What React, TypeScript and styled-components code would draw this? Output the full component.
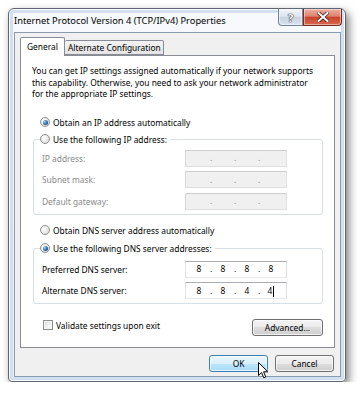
import React from "react";
import styled, { createGlobalStyle } from "styled-components";

const GlobalStyle = createGlobalStyle`
  html, body {
    margin: 0;
    background: #fff;
  }
  body {
    font-family: "Noto Sans", "Open Sans", sans-serif;
    font-size: 8.4px;
    color: #000;
  }
`;

const Stage = styled.div`
  padding: 8px 0 0 8px;
`;

const Window = styled.div`
  width: 338px;
  height: 374px;
  box-sizing: border-box;
  border: 1px solid #5d6672;
  border-radius: 6px 6px 4px 4px;
  background: linear-gradient(180deg, #f7f9fc 0%, #e9f0f8 100%);
  box-shadow: inset 0 0 0 1px #fff, inset 0 0 0 4px #d0e0f1, 3px 4px 8px rgba(0, 0, 0, 0.5);
  display: flex;
  flex-direction: column;
`;

const TitleBar = styled.div`
  height: 23px;
  display: flex;
  align-items: flex-start;
`;

const Title = styled.div`
  padding: 5px 0 0 5px;
  font-size: 9.3px;
  line-height: 14px;
  white-space: nowrap;
`;

const CaptionButtons = styled.div`
  margin-left: auto;
  margin-right: 3px;
  display: flex;
`;

const CaptionButton = styled.div<{ $close?: boolean }>`
  width: ${(p) => (p.$close ? 39 : 25)}px;
  height: 17px;
  box-sizing: border-box;
  display: flex;
  align-items: center;
  justify-content: center;
  border: 1px solid ${(p) => (p.$close ? "#7a2c22" : "#76869a")};
  border-top: none;
  border-radius: ${(p) => (p.$close ? "0 0 4px 0" : "0 0 0 4px")};
  background: ${(p) =>
    p.$close
      ? "linear-gradient(180deg, #ecb0a3 0%, #df826c 45%, #c9442b 52%, #d5694f 100%)"
      : "linear-gradient(180deg, #f3f6fa 0%, #dde5ef 45%, #c9d4e2 52%, #dae3ee 100%)"};
  box-shadow: inset 0 0 0 1px rgba(255, 255, 255, 0.45);
  font-size: 11px;
  font-weight: bold;
  color: #fff;
  text-shadow: 0 0 1px #333, 0 0 1px #333, 0 0 1px #333;
`;

const Client = styled.div`
  flex: 1;
  margin: 0 4px 4px 5px;
  box-sizing: border-box;
  border: 1px solid #8a9bb0;
  background: #f0f0f0;
  padding: 4px 5px;
  display: flex;
  flex-direction: column;
`;

const TabStrip = styled.div`
  height: 18px;
  display: flex;
  align-items: flex-end;
  position: relative;
  z-index: 1;
`;

const Tab = styled.div<{ $active?: boolean }>`
  box-sizing: border-box;
  height: ${(p) => (p.$active ? 19 : 15)}px;
  margin-bottom: ${(p) => (p.$active ? -1 : 0)}px;
  padding: ${(p) => (p.$active ? "3px 6px 0" : "1px 2px 0 3px")};
  border: 1px solid #898c95;
  border-left: ${(p) => (p.$active ? "1px solid #898c95" : "none")};
  border-bottom: ${(p) => (p.$active ? "none" : "1px solid #898c95")};
  border-radius: 2px 2px 0 0;
  background: ${(p) => (p.$active ? "#fff" : "linear-gradient(180deg, #f3f3f3 0%, #e4e4e4 100%)")};
  line-height: 12px;
  white-space: nowrap;
`;

const Panel = styled.div`
  height: 293px;
  box-sizing: border-box;
  border: 1px solid #898c95;
  background: #fff;
  display: flex;
  flex-direction: column;
`;

const Intro = styled.p`
  margin: 0;
  padding: 9px 0 0 11px;
  line-height: 11.5px;
  white-space: nowrap;
`;

const RadioRow = styled.label<{ $top: number }>`
  display: flex;
  align-items: center;
  gap: 3px;
  height: 13px;
  margin: ${(p) => p.$top}px 0 0 19px;
  white-space: nowrap;
`;

const Radio = styled.span<{ $checked?: boolean }>`
  width: 10px;
  height: 10px;
  box-sizing: border-box;
  border-radius: 50%;
  border: 1px solid #8e8f8f;
  background: radial-gradient(circle at 35% 35%, #ffffff 0%, #e6e6e6 60%, #cfcfcf 100%);
  display: inline-flex;
  align-items: center;
  justify-content: center;
  flex-shrink: 0;

  &::after {
    content: "";
    display: ${(p) => (p.$checked ? "block" : "none")};
    width: 5px;
    height: 5px;
    border-radius: 50%;
    background: radial-gradient(circle at 35% 35%, #a8d6f7 0%, #2a6fb0 50%, #0e2d52 100%);
  }
`;

const GroupBox = styled.fieldset<{ $top: number; $padTop: number }>`
  margin: ${(p) => p.$top}px 11px 0 12px;
  padding: ${(p) => p.$padTop}px 0 4px 8px;
  border: 1px solid #d5dfe5;
  border-radius: 3px;
  min-width: 0;
`;

const Legend = styled.legend`
  margin-left: -2px;
  padding: 0 3px 0 0;
  display: flex;
  align-items: center;
  gap: 3px;
  height: 13px;
  white-space: nowrap;
`;

const Fields = styled.div`
  display: grid;
  grid-template-columns: 143px 102px;
  row-gap: 4.5px;
  align-items: center;
`;

const FieldLabel = styled.span<{ $disabled?: boolean }>`
  color: ${(p) => (p.$disabled ? "#8a8a8a" : "#000")};
  white-space: nowrap;
`;

const IpBox = styled.div<{ $disabled?: boolean }>`
  width: 102px;
  height: 17px;
  box-sizing: border-box;
  border: 1px solid;
  border-color: ${(p) => (p.$disabled ? "#cdcdcd #e0e0e0 #e0e0e0 #d6d6d6" : "#abadb3 #dbdfe6 #e3e9ef #e2e3ea")};
  background: ${(p) => (p.$disabled ? "#f0f0f0" : "#fff")};
  color: ${(p) => (p.$disabled ? "#8a8a9a" : "#000")};
  display: flex;
  align-items: center;
  padding-left: 3px;
`;

const Octet = styled.span`
  width: 20px;
  text-align: center;
  line-height: 12px;
`;

const Dot = styled.span`
  width: 4px;
  text-align: center;
  line-height: 12px;
`;

const Caret = styled.span`
  display: inline-block;
  width: 0;
  height: 11px;
  border-left: 1px solid #000;
  margin-left: 1px;
  vertical-align: -3px;
`;

const BottomRow = styled.div`
  display: flex;
  align-items: center;
  justify-content: space-between;
  margin: 15px 11px 0 22px;
`;

const CheckRow = styled.label`
  display: flex;
  align-items: center;
  gap: 3px;
  white-space: nowrap;
  margin-bottom: 5px;
`;

const Checkbox = styled.span`
  width: 10px;
  height: 10px;
  box-sizing: border-box;
  border: 1px solid #8e8f8f;
  background: linear-gradient(135deg, #d8d8d8 0%, #f3f3f3 60%, #ffffff 100%);
  box-shadow: inset 0 0 0 1px #f4f4f4;
`;

const PushButton = styled.button<{ $w: number; $default?: boolean }>`
  position: relative;
  width: ${(p) => p.$w}px;
  height: 17px;
  box-sizing: border-box;
  padding: 0;
  font: inherit;
  color: #000;
  border: 1px solid ${(p) => (p.$default ? "#3c7fb1" : "#707070")};
  border-radius: 3px;
  background: ${(p) =>
    p.$default
      ? "linear-gradient(180deg, #eaf6fd 0%, #d9f0fc 50%, #bee6fd 50%, #a7d9f5 100%)"
      : "linear-gradient(180deg, #f2f2f2 0%, #ebebeb 50%, #dddddd 50%, #cfcfcf 100%)"};
  box-shadow: inset 0 0 0 1px rgba(255, 255, 255, 0.7);
`;

const Footer = styled.div`
  display: flex;
  justify-content: flex-end;
  gap: 7px;
  margin-top: 7px;
  padding-right: 1px;
`;

const Pointer = styled.svg`
  position: absolute;
  left: 48px;
  top: 6px;
  overflow: visible;
`;

const CloseGlyph = () => (
  <svg width="12" height="10" viewBox="0 0 12 10">
    <path
      d="M1.5 1 L10.5 9 M10.5 1 L1.5 9"
      stroke="#4a1a14"
      strokeWidth="3.6"
      strokeLinecap="square"
      fill="none"
    />
    <path
      d="M1.5 1 L10.5 9 M10.5 1 L1.5 9"
      stroke="#fff"
      strokeWidth="2"
      strokeLinecap="square"
      fill="none"
    />
  </svg>
);

type IpProps = { value?: string[]; disabled?: boolean; caret?: boolean };

const IpField: React.FC<IpProps> = ({ value = ["", "", "", ""], disabled, caret }) => (
  <IpBox $disabled={disabled}>
    {value.map((v, i) => (
      <React.Fragment key={i}>
        {i > 0 && <Dot>.</Dot>}
        <Octet>
          {v}
          {caret && i === 3 && <Caret />}
        </Octet>
      </React.Fragment>
    ))}
  </IpBox>
);

const App: React.FC = () => {
  return (
    <Stage>
      <GlobalStyle />
      <Window>
        <TitleBar>
          <Title>Internet Protocol Version 4 (TCP/IPv4) Properties</Title>
          <CaptionButtons>
            <CaptionButton>?</CaptionButton>
            <CaptionButton $close>
              <CloseGlyph />
            </CaptionButton>
          </CaptionButtons>
        </TitleBar>
        <Client>
          <TabStrip>
            <Tab $active>General</Tab>
            <Tab>Alternate Configuration</Tab>
          </TabStrip>
          <Panel>
            <Intro>
              You can get IP settings assigned automatically if your network supports
              <br />
              this capability. Otherwise, you need to ask your network administrator
              <br />
              for the appropriate IP settings.
            </Intro>

            <RadioRow $top={16}>
              <Radio $checked />
              Obtain an IP address automatically
            </RadioRow>

            <GroupBox $top={4} $padTop={4}>
              <Legend>
                <Radio />
                Use the following IP address:
              </Legend>
              <Fields>
                <FieldLabel $disabled>IP address:</FieldLabel>
                <IpField disabled />
                <FieldLabel $disabled>Subnet mask:</FieldLabel>
                <IpField disabled />
                <FieldLabel $disabled>Default gateway:</FieldLabel>
                <IpField disabled />
              </Fields>
            </GroupBox>

            <RadioRow $top={9}>
              <Radio />
              Obtain DNS server address automatically
            </RadioRow>

            <GroupBox $top={5} $padTop={6}>
              <Legend>
                <Radio $checked />
                Use the following DNS server addresses:
              </Legend>
              <Fields>
                <FieldLabel>Preferred DNS server:</FieldLabel>
                <IpField value={["8", "8", "8", "8"]} />
                <FieldLabel>Alternate DNS server:</FieldLabel>
                <IpField value={["8", "8", "4", "4"]} caret />
              </Fields>
            </GroupBox>

            <BottomRow>
              <CheckRow>
                <Checkbox />
                Validate settings upon exit
              </CheckRow>
              <PushButton $w={71}>Advanced...</PushButton>
            </BottomRow>
          </Panel>
          <Footer>
            <PushButton $w={59} $default>
              OK
              <Pointer width="11" height="17" viewBox="0 0 11 17">
                <path
                  d="M0.5 0.5 L0.5 13.5 L3.5 10.5 L5.8 15.8 L7.8 15 L5.6 9.8 L9.8 9.8 Z"
                  fill="#fff"
                  stroke="#000"
                  strokeWidth="1"
                  strokeLinejoin="round"
                />
              </Pointer>
            </PushButton>
            <PushButton $w={59}>Cancel</PushButton>
          </Footer>
        </Client>
      </Window>
    </Stage>
  );
};

export default App;
